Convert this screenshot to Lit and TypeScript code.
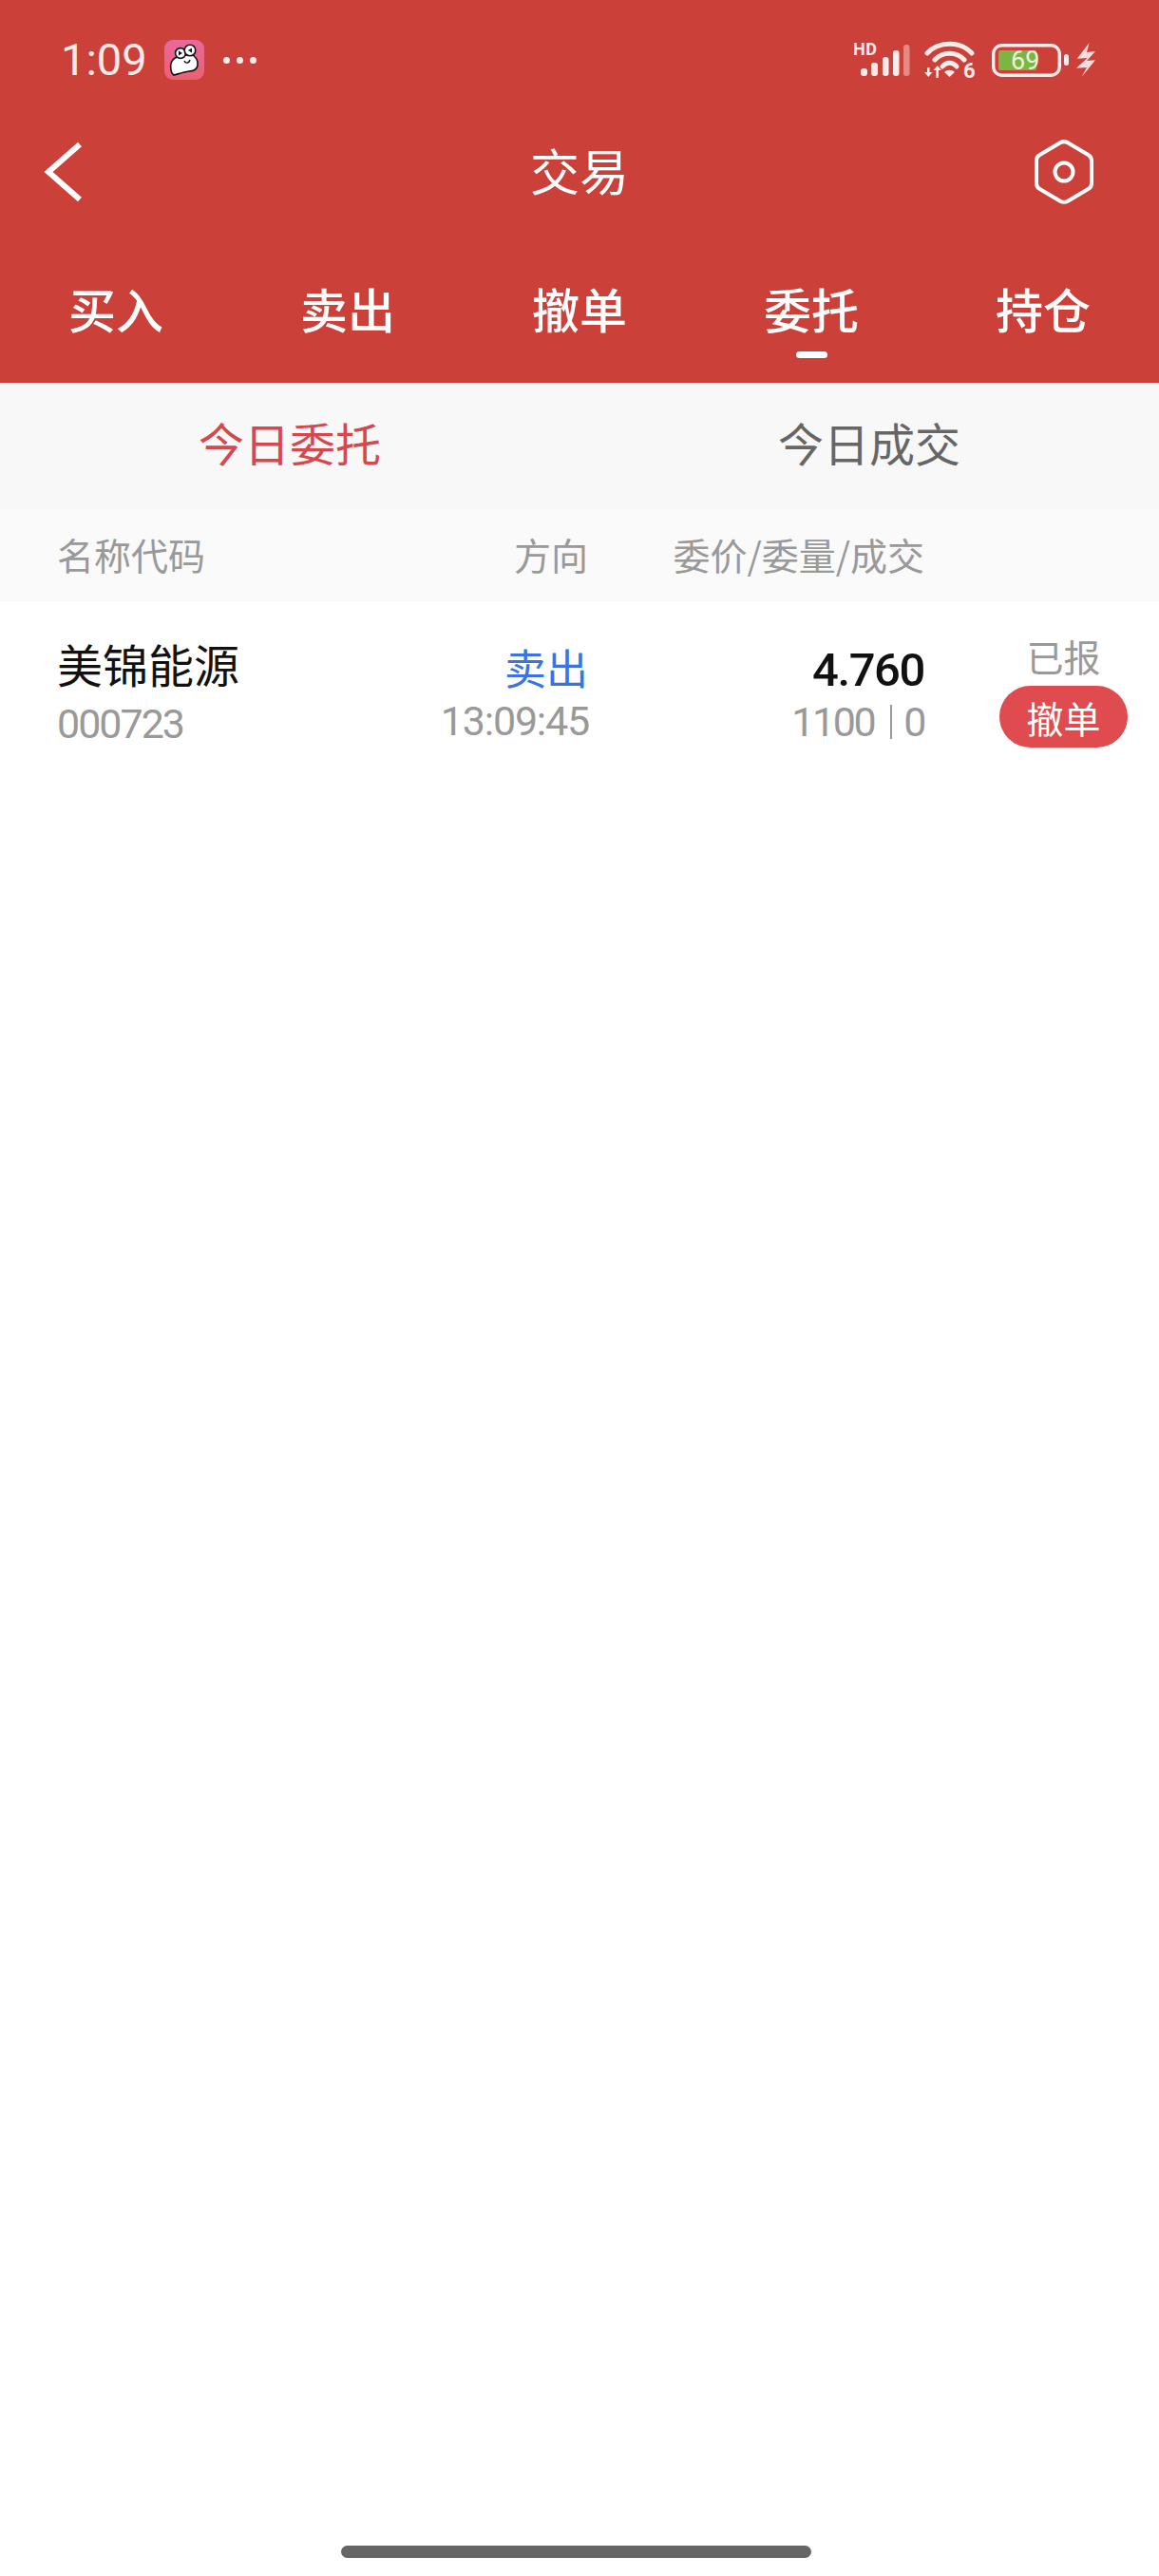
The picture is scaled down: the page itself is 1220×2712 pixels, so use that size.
import { html, css, LitElement } from 'lit';
import { customElement } from 'lit/decorators.js';

@customElement('app-root')
export class AppRoot extends LitElement {
  static styles = css`
    :host {
      display: flex;
      flex-direction: column;
      min-height: 2712px;
      background: #fff;
      font-family: 'Noto Sans CJK SC', 'Noto Sans', sans-serif;
      color: #111;
    }

    svg {
      display: block;
      flex: none;
    }

    .header {
      background: #cb413a;
      color: #fff;
      height: 403px;
    }

    .status {
      display: flex;
      align-items: center;
      height: 126px;
      padding: 0 67px 0 64px;
      box-sizing: border-box;
    }

    .time {
      font-family: Roboto, sans-serif;
      font-size: 47px;
      line-height: 48px;
      width: 109px;
      color: #ffe9e9;
    }

    .dots {
      display: flex;
      gap: 7px;
      margin-left: 20px;
    }

    .dots i {
      width: 7px;
      height: 7px;
      border-radius: 50%;
      background: #ffe9e9;
    }

    .status-right {
      display: flex;
      align-items: center;
      margin-left: auto;
    }

    .signal {
      margin-right: 15px;
    }

    .wifi {
      margin-right: 18px;
    }

    .battery {
      margin-right: 8px;
    }

    .nav {
      display: grid;
      grid-template-columns: 1fr auto 1fr;
      align-items: center;
      height: 110px;
      padding: 0 68px;
    }

    .nav .back {
      margin-left: -24px;
    }

    .nav .gear {
      justify-self: end;
    }

    .title {
      font-size: 52px;
      line-height: 60px;
      margin-top: -5px;
    }

    .tabs {
      display: grid;
      grid-template-columns: repeat(5, 244px);
      padding-top: 59px;
    }

    .tab {
      display: flex;
      flex-direction: column;
      align-items: center;
      font-size: 50px;
      font-weight: 500;
      line-height: 58px;
    }

    .tab .mark {
      width: 33px;
      height: 7px;
      margin-top: 17px;
      border-radius: 4px;
    }

    .tab.active .mark {
      background: #fff;
    }

    .subtabs {
      display: grid;
      grid-template-columns: 1fr 1fr;
      height: 134px;
      background: #f8f8f8;
      font-size: 48px;
      color: #666;
    }

    .subtabs div {
      display: flex;
      align-items: center;
      justify-content: center;
      padding-bottom: 10px;
      box-sizing: border-box;
    }

    .subtabs .active {
      color: #d5484e;
    }

    .cols {
      display: grid;
      grid-template-columns: 300px 259px 354px 1fr;
      padding-left: 60px;
    }

    .right {
      text-align: right;
    }

    .table-head {
      height: 96px;
      padding-bottom: 5px;
      box-sizing: border-box;
      align-items: center;
      background: #fafafa;
      font-size: 39px;
      line-height: 46px;
      color: #999;
    }

    .row {
      padding-top: 36px;
    }

    .name {
      font-size: 48px;
      line-height: 58px;
      color: #111;
    }

    .num {
      font-family: Roboto, sans-serif;
      font-size: 43px;
      line-height: 50px;
      color: #999;
    }

    .code {
      margin-top: 10px;
      letter-spacing: -2px;
    }

    .clock {
      margin-top: 6px;
      margin-right: -1px;
      letter-spacing: -1.2px;
    }

    .side {
      font-size: 44px;
      line-height: 52px;
      margin-top: 7px;
      color: #3d73e0;
    }

    .price {
      font-family: Roboto, sans-serif;
      font-size: 49px;
      line-height: 54px;
      margin-top: 10px;
      font-weight: 500;
      letter-spacing: -1.4px;
      color: #111;
    }

    .volume {
      display: flex;
      justify-content: flex-end;
      align-items: center;
      margin-top: 2px;
      letter-spacing: -2.4px;
    }

    .volume i {
      width: 2px;
      height: 36px;
      margin: 0 12px 0 17px;
      background: #999;
    }

    .state {
      display: flex;
      flex-direction: column;
      align-items: center;
      width: 135px;
      margin-left: 79px;
      margin-top: -2px;
    }

    .state span {
      font-size: 39px;
      line-height: 46px;
      color: #999;
    }

    .cancel {
      display: flex;
      align-items: center;
      justify-content: center;
      width: 135px;
      height: 65px;
      margin-top: 9px;
      border-radius: 33px;
      background: #e04b4f;
      color: #fff;
      font-size: 39px;
    }

    .home {
      margin: auto 0 19px 359px;
      width: 495px;
      height: 13px;
      border-radius: 7px;
      background: #666;
    }
  `;

  appIcon() {
    return html`<svg width="42" height="42" viewBox="0 0 42 42">
      <defs>
        <linearGradient id="pink" x1="0" y1="0" x2="0" y2="1">
          <stop offset="0" stop-color="#e8699f" />
          <stop offset="1" stop-color="#ec6070" />
        </linearGradient>
      </defs>
      <rect width="42" height="42" rx="9" fill="url(#pink)" />
      <path
        d="M8 35C6 30 6 24 9 21 11 18 13 18 15 18L28 15C33 17 36 22 35 27 34 32 30 33 26 33 20 34 14 36 10 37Z"
        fill="#fff"
        stroke="#111"
        stroke-width="1.6"
      />
      <circle cx="17" cy="14" r="5.4" fill="#fff" stroke="#111" stroke-width="1.6" />
      <circle cx="27" cy="11" r="5.8" fill="#fff" stroke="#111" stroke-width="1.6" />
      <path d="M15 11.5l4 2.5-4 2.5z" fill="#111" />
      <path d="M29 8.5l-4 2.5 4 2.5z" fill="#111" />
      <path d="M21 22c1 3 5 3 6-1" fill="none" stroke="#111" stroke-width="1.4" />
    </svg>`;
  }

  signal() {
    return html`<svg class="signal" width="59" height="48" viewBox="0 -6 59 48">
      <text x="-1" y="13" font-family="Roboto, sans-serif" font-size="18" font-weight="700" letter-spacing=".6" fill="#ffe9e9">HD</text>
      <rect x="7" y="27" width="7" height="8" rx="3" fill="#ffe9e9" />
      <rect x="18" y="21" width="7" height="14" rx="3" fill="#ffe9e9" />
      <rect x="30" y="15" width="6.5" height="20" rx="3" fill="#ffe9e9" />
      <rect x="41" y="8" width="6.5" height="27" rx="3" fill="#ffe9e9" />
      <rect x="52" y="2" width="6.5" height="33" rx="3" fill="#e58983" />
    </svg>`;
  }

  wifi() {
    return html`<svg class="wifi" width="53" height="48" viewBox="0 -4 53 48">
      <g fill="none" stroke="#ffe9e9" stroke-width="5" stroke-linecap="round">
        <path d="M3 13C15 0 38 0 50 13" />
        <path d="M11 20C19 11 34 11 42 20" />
        <path d="M19 27C23 22 30 22 34 27" />
      </g>
      <path d="M21 33c3-3 8-3 11 0l-5.500 5z" fill="#ffe9e9" />
      <path d="M0 33h3v-5h2.500v5h3l-4.200 5zM9.500 31l4.200-5 4.200 5h-3v8h-2.500v-8z" fill="#ffe9e9" />
      <text x="41" y="39" font-family="Roboto, sans-serif" font-size="22" font-weight="700" fill="#ffe9e9">6</text>
    </svg>`;
  }

  battery() {
    return html`<svg class="battery" width="81" height="35" viewBox="0 0 81 35">
      <rect x="1.700" y="1.700" width="69.600" height="31.600" rx="9" fill="none" stroke="#ffe9e9" stroke-width="3.400" />
      <rect x="7" y="7" width="40" height="21" rx="2" fill="#7db544" />
      <rect x="76" y="11" width="5" height="12" rx="2.500" fill="#ffe9e9" />
      <text x="20" y="27" font-family="Roboto, sans-serif" font-size="27" fill="#eaf6dc">69</text>
    </svg>`;
  }

  bolt() {
    return html`<svg width="20" height="36" viewBox="0 0 20 36">
      <path
        d="M13.600 0L.8 16.700 11.700 16 0 26.700 10.900 26 5.800 35.700 20 18.300 10.900 19 20 9 10.900 10z"
        fill="#fbdcdc"
      />
    </svg>`;
  }

  back() {
    return html`<svg class="back" width="44" height="66" viewBox="0 0 44 66">
      <path d="M40 4L7 33l33 29" fill="none" stroke="#fff" stroke-width="6" />
    </svg>`;
  }

  gear() {
    return html`<svg class="gear" width="64" height="70" viewBox="0 0 64 70">
      <path
        d="M28 4.300a8 8 0 0 1 8 0l21 12.400a7 7 0 0 1 4 6v24.600a7 7 0 0 1-4 6L36 65.700a8 8 0 0 1-8 0L7 53.300a7 7 0 0 1-4-6V22.700a7 7 0 0 1 4-6z"
        fill="none"
        stroke="#fff"
        stroke-width="4"
      />
      <circle cx="32" cy="35" r="9.500" fill="none" stroke="#fff" stroke-width="4" />
    </svg>`;
  }

  render() {
    const tabs = ['买入', '卖出', '撤单', '委托', '持仓'];
    return html`
      <div class="header">
        <div class="status">
          <span class="time">1:09</span>
          ${this.appIcon()}
          <div class="dots"><i></i><i></i><i></i></div>
          <div class="status-right">
            ${this.signal()} ${this.wifi()} ${this.battery()} ${this.bolt()}
          </div>
        </div>
        <div class="nav">
          ${this.back()}
          <span class="title">交易</span>
          ${this.gear()}
        </div>
        <div class="tabs">
          ${tabs.map(
            (t) => html`<div class="tab ${t === '委托' ? 'active' : ''}">
              <span>${t}</span><i class="mark"></i>
            </div>`
          )}
        </div>
      </div>
      <div class="subtabs">
        <div class="active">今日委托</div>
        <div>今日成交</div>
      </div>
      <div class="cols table-head">
        <span>名称代码</span>
        <span class="right">方向</span>
        <span class="right">委价/委量/成交</span>
      </div>
      <div class="cols row">
        <div>
          <div class="name">美锦能源</div>
          <div class="num code">000723</div>
        </div>
        <div class="right">
          <div class="side">卖出</div>
          <div class="num clock">13:09:45</div>
        </div>
        <div class="right">
          <div class="price">4.760</div>
          <div class="num volume">1100<i></i>0</div>
        </div>
        <div class="state">
          <span>已报</span>
          <div class="cancel">撤单</div>
        </div>
      </div>
      <div class="home"></div>
    `;
  }
}
